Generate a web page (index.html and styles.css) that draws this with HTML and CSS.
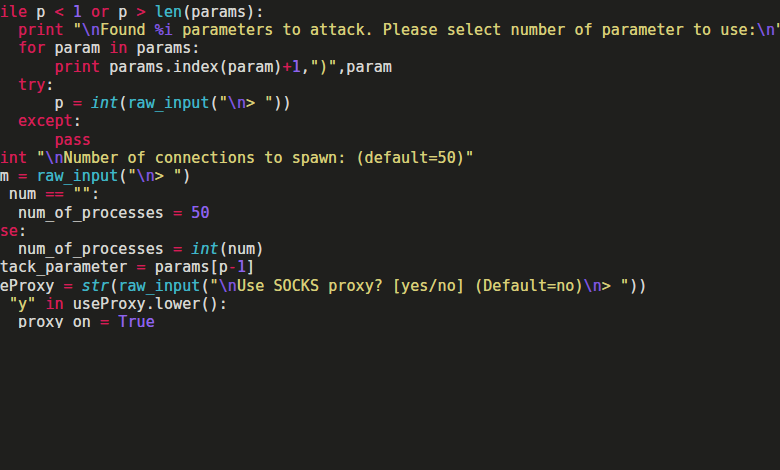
FILE: index.html
```html
<!DOCTYPE html>
<html>
<head>
<meta charset="utf-8">
<link rel="stylesheet" href="styles.css">
</head>
<body>
<div class="editor">
<pre class="code"><span class="k">while</span> p <span class="k">&lt;</span> <span class="n">1</span> <span class="k">or</span> p <span class="k">&gt;</span> <span class="f">len</span>(params):
    <span class="k">print</span> <span class="s">"<span class="e">\n</span>Found <span class="e">%i</span> parameters to attack. Please select number of parameter to use:<span class="e">\n</span>"</span>
    <span class="k">for</span> param <span class="k">in</span> params:
        <span class="k">print</span> params.index(param)<span class="k">+</span><span class="n">1</span>,<span class="s">")"</span>,param
    <span class="k">try</span>:
        p <span class="k">=</span> <span class="f i">int</span>(<span class="f">raw_input</span>(<span class="s">"<span class="e">\n</span>&gt; "</span>))
    <span class="k">except</span>:
        <span class="k">pass</span>
<span class="k">print</span> <span class="s">"<span class="e">\n</span>Number of connections to spawn: (default=50)"</span>
num <span class="k">=</span> <span class="f">raw_input</span>(<span class="s">"<span class="e">\n</span>&gt; "</span>)
<span class="k">if</span> num <span class="k">==</span> <span class="s">""</span>:
    num_of_processes <span class="k">=</span> <span class="n">50</span>
<span class="k">else</span>:
    num_of_processes <span class="k">=</span> <span class="f i">int</span>(num)
attack_parameter <span class="k">=</span> params[p<span class="k">-</span><span class="n">1</span>]
useProxy <span class="k">=</span> <span class="f i">str</span>(<span class="f">raw_input</span>(<span class="s">"<span class="e">\n</span>Use SOCKS proxy? [yes/no] (Default=no)<span class="e">\n</span>&gt; "</span>))
<span class="k">if</span> <span class="s">"y"</span> <span class="k">in</span> useProxy.lower():
    proxy_on <span class="k">=</span> <span class="n">True</span></pre>
</div>
</body>
</html>
```
FILE: styles.css
```css
html, body {
  margin: 0;
  padding: 0;
  background: #1f1f1d;
  width: 780px;
  height: 470px;
  overflow: hidden;
}
.editor {
  height: 328px;
  overflow: hidden;
  padding-top: 3px;
  box-sizing: border-box;
}
.code {
  margin: 0 0 0 -18.5px;
  font-family: "DejaVu Sans Mono", "Liberation Mono", monospace;
  font-size: 15px;
  line-height: 18.24px;
  color: #d6d6d2;
  white-space: pre;
  letter-spacing: 0.09px;
  text-shadow: 0 0 0.4px currentColor;
}
.k { color: #d51d55; }
.s { color: #d8cf78; }
.e { color: #7d55e0; }
.n { color: #8d63ee; }
.f { color: #3fb6c8; }
.i { font-style: italic; }
```
